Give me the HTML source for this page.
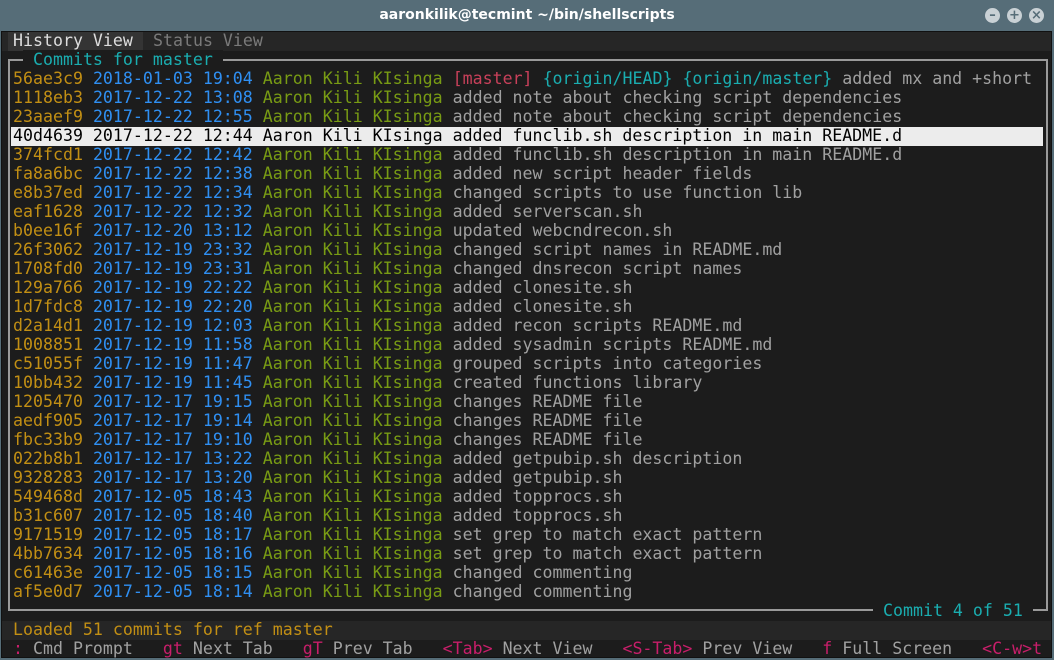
<!DOCTYPE html>
<html><head><style>
body{margin:0;width:1054px;height:660px;background:#566d78;overflow:hidden;font-family:"DejaVu Sans Mono","Liberation Mono",monospace;}
#title{position:absolute;left:0;top:0;width:1054px;height:31px;color:#fff;font:bold 14px "DejaVu Sans","Liberation Sans",sans-serif;text-align:center;line-height:31px;}
.btn{position:absolute;top:8px;width:15px;height:15px;border-radius:50%;background:#c9d1d5;color:#566d78;font:bold 13px/15px "DejaVu Sans",sans-serif;text-align:center;}
#term{position:absolute;left:1px;top:31px;width:1051px;height:627px;background:#1c1c1c;border:1px solid #111;box-sizing:border-box;}
.r{position:absolute;left:11px;height:19px;line-height:19px;font-size:16.6px;white-space:pre;color:#a0a0a0;margin-top:-1px;}
.h{color:#c28f14}.d{color:#2f8ff2}.a{color:#789b14}.c{color:#1aadb0}.m{color:#c81e6a}.rd{color:#c8405a}.y{color:#c28f14}.w{color:#ddd}
#box{position:absolute;left:6px;top:27px;width:1040px;height:552px;border:2px solid #9a9a9a;box-sizing:border-box;}
.sel{position:absolute;left:9px;width:1032px;height:19px;background:#ececec;}
</style></head><body>
<div id="title">aaronkilik@tecmint ~/bin/shellscripts</div>
<div class="btn" style="left:985px">–</div><div class="btn" style="left:1007px">+</div><div class="btn" style="left:1029px">×</div>
<div id="term">
<div style="position:absolute;left:0;top:0;width:1049px;height:19px;background:#262626"></div>
<div style="position:absolute;left:6px;top:0;width:135px;height:19px;background:#343434"></div>
<div class="r w" style="top:0;left:11px">History View</div>
<div class="r" style="top:0;left:151px;color:#7a7a7a">Status View</div>
<div id="box"></div>
<div class="r c" style="top:19px;left:21px;background:#1c1c1c"> Commits for master </div>
<div class="r c" style="top:570px;left:871px;background:#1c1c1c"> Commit 4 of 51 </div>
<div class="sel" style="top:95px"></div>
<div style="position:absolute;left:0;top:589px;width:1049px;height:19px;background:#262626"></div>
<div class="r y" style="top:589px">Loaded 51 commits for ref master</div>
<div class="r" style="top:608px"><span class="m">:</span> Cmd Prompt   <span class="m">gt</span> Next Tab   <span class="m">gT</span> Prev Tab   <span class="m">&lt;Tab&gt;</span> Next View   <span class="m">&lt;S-Tab&gt;</span> Prev View   <span class="m">f</span> Full Screen   <span class="m">&lt;C-w&gt;t</span></div>
<div class="r" style="top:38px"><span class="h">56ae3c9</span> <span class="d">2018-01-03 19:04</span> <span class="a">Aaron Kili KIsinga</span> <span class="rd">[master]</span> <span class="c">{origin/HEAD}</span> <span class="c">{origin/master}</span> added mx and +short</div>
<div class="r" style="top:57px"><span class="h">1118eb3</span> <span class="d">2017-12-22 13:08</span> <span class="a">Aaron Kili KIsinga</span> added note about checking script dependencies</div>
<div class="r" style="top:76px"><span class="h">23aaef9</span> <span class="d">2017-12-22 12:55</span> <span class="a">Aaron Kili KIsinga</span> added note about checking script dependencies</div>
<div class="r" style="top:95px;color:#000">40d4639 2017-12-22 12:44 Aaron Kili KIsinga added funclib.sh description in main README.d</div>
<div class="r" style="top:114px"><span class="h">374fcd1</span> <span class="d">2017-12-22 12:42</span> <span class="a">Aaron Kili KIsinga</span> added funclib.sh description in main README.d</div>
<div class="r" style="top:133px"><span class="h">fa8a6bc</span> <span class="d">2017-12-22 12:38</span> <span class="a">Aaron Kili KIsinga</span> added new script header fields</div>
<div class="r" style="top:152px"><span class="h">e8b37ed</span> <span class="d">2017-12-22 12:34</span> <span class="a">Aaron Kili KIsinga</span> changed scripts to use function lib</div>
<div class="r" style="top:171px"><span class="h">eaf1628</span> <span class="d">2017-12-22 12:32</span> <span class="a">Aaron Kili KIsinga</span> added serverscan.sh</div>
<div class="r" style="top:190px"><span class="h">b0ee16f</span> <span class="d">2017-12-20 13:12</span> <span class="a">Aaron Kili KIsinga</span> updated webcndrecon.sh</div>
<div class="r" style="top:209px"><span class="h">26f3062</span> <span class="d">2017-12-19 23:32</span> <span class="a">Aaron Kili KIsinga</span> changed script names in README.md</div>
<div class="r" style="top:228px"><span class="h">1708fd0</span> <span class="d">2017-12-19 23:31</span> <span class="a">Aaron Kili KIsinga</span> changed dnsrecon script names</div>
<div class="r" style="top:247px"><span class="h">129a766</span> <span class="d">2017-12-19 22:22</span> <span class="a">Aaron Kili KIsinga</span> added clonesite.sh</div>
<div class="r" style="top:266px"><span class="h">1d7fdc8</span> <span class="d">2017-12-19 22:20</span> <span class="a">Aaron Kili KIsinga</span> added clonesite.sh</div>
<div class="r" style="top:285px"><span class="h">d2a14d1</span> <span class="d">2017-12-19 12:03</span> <span class="a">Aaron Kili KIsinga</span> added recon scripts README.md</div>
<div class="r" style="top:304px"><span class="h">1008851</span> <span class="d">2017-12-19 11:58</span> <span class="a">Aaron Kili KIsinga</span> added sysadmin scripts README.md</div>
<div class="r" style="top:323px"><span class="h">c51055f</span> <span class="d">2017-12-19 11:47</span> <span class="a">Aaron Kili KIsinga</span> grouped scripts into categories</div>
<div class="r" style="top:342px"><span class="h">10bb432</span> <span class="d">2017-12-19 11:45</span> <span class="a">Aaron Kili KIsinga</span> created functions library</div>
<div class="r" style="top:361px"><span class="h">1205470</span> <span class="d">2017-12-17 19:15</span> <span class="a">Aaron Kili KIsinga</span> changes README file</div>
<div class="r" style="top:380px"><span class="h">aedf905</span> <span class="d">2017-12-17 19:14</span> <span class="a">Aaron Kili KIsinga</span> changes README file</div>
<div class="r" style="top:399px"><span class="h">fbc33b9</span> <span class="d">2017-12-17 19:10</span> <span class="a">Aaron Kili KIsinga</span> changes README file</div>
<div class="r" style="top:418px"><span class="h">022b8b1</span> <span class="d">2017-12-17 13:22</span> <span class="a">Aaron Kili KIsinga</span> added getpubip.sh description</div>
<div class="r" style="top:437px"><span class="h">9328283</span> <span class="d">2017-12-17 13:20</span> <span class="a">Aaron Kili KIsinga</span> added getpubip.sh</div>
<div class="r" style="top:456px"><span class="h">549468d</span> <span class="d">2017-12-05 18:43</span> <span class="a">Aaron Kili KIsinga</span> added topprocs.sh</div>
<div class="r" style="top:475px"><span class="h">b31c607</span> <span class="d">2017-12-05 18:40</span> <span class="a">Aaron Kili KIsinga</span> added topprocs.sh</div>
<div class="r" style="top:494px"><span class="h">9171519</span> <span class="d">2017-12-05 18:17</span> <span class="a">Aaron Kili KIsinga</span> set grep to match exact pattern</div>
<div class="r" style="top:513px"><span class="h">4bb7634</span> <span class="d">2017-12-05 18:16</span> <span class="a">Aaron Kili KIsinga</span> set grep to match exact pattern</div>
<div class="r" style="top:532px"><span class="h">c61463e</span> <span class="d">2017-12-05 18:15</span> <span class="a">Aaron Kili KIsinga</span> changed commenting</div>
<div class="r" style="top:551px"><span class="h">af5e0d7</span> <span class="d">2017-12-05 18:14</span> <span class="a">Aaron Kili KIsinga</span> changed commenting</div>
</div>
</body></html>
